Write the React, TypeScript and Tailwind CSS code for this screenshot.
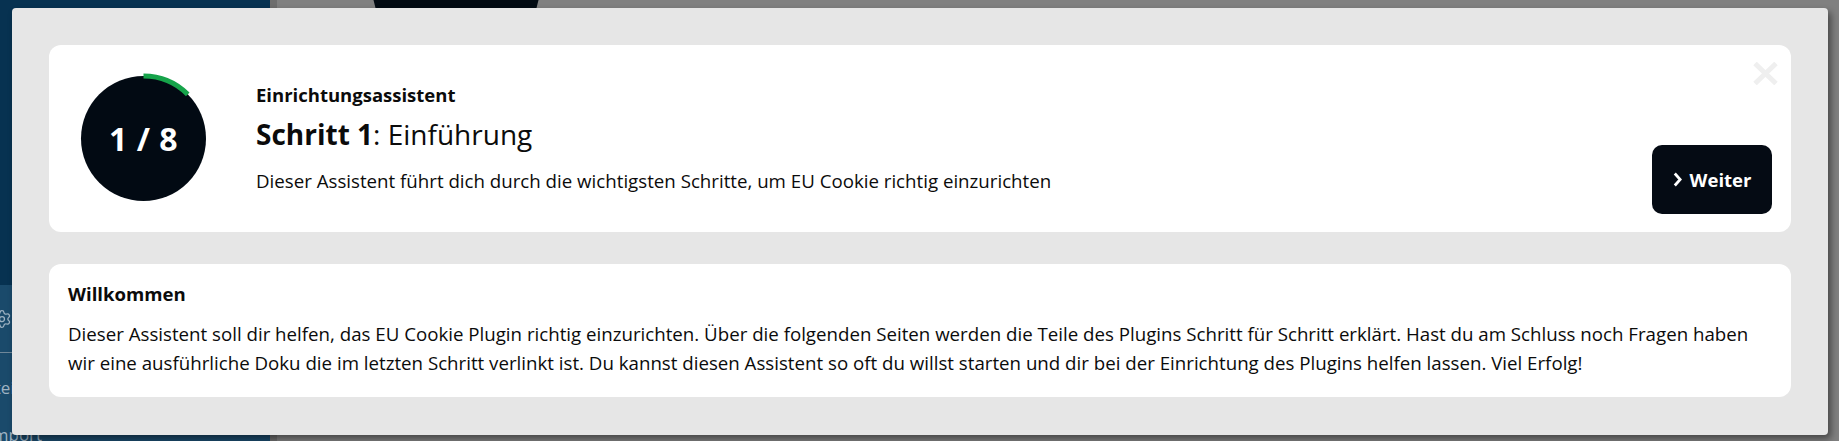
import { Settings } from 'lucide-react';

function ProgressRing({ step, total }: { step: number; total: number }) {
  const r = 62.5;
  const c = 2 * Math.PI * r;
  const part = (step / total) * c;

  return (
    <div className="relative w-[125px] h-[125px] shrink-0 rounded-full bg-[#020a13] flex items-center justify-center">
      <svg className="absolute -inset-[4px] w-[133px] h-[133px] -rotate-90" viewBox="0 0 133 133">
        <circle
          cx="66.5"
          cy="66.5"
          r={r}
          fill="none"
          stroke="#16a34a"
          strokeWidth="5"
          strokeDasharray={`${part} ${c}`}
        />
      </svg>
      <span className="text-white text-[32px] font-bold leading-none tracking-[0.5px]">
        {step} / {total}
      </span>
    </div>
  );
}

function Backdrop() {
  return (
    <div className="absolute inset-0 flex">
      <aside className="w-[270px] flex flex-col overflow-hidden">
        <div className="h-[285px] shrink-0 bg-[#073251]" />
        <div className="flex-1 bg-[#1a4a6b] flex flex-col text-[#9fb3c3] text-[17px] font-['Open_Sans',sans-serif]">
          <div className="h-[67px] shrink-0 flex items-center -ml-[8px]">
            <Settings size={20} strokeWidth={1.5} />
          </div>
          <div className="h-px shrink-0 bg-[#6f8799]" />
          <div className="h-[70px] shrink-0 flex items-center -ml-[27px]">Datei</div>
          <div className="shrink-0 leading-[24px] -ml-[12px]">Import</div>
        </div>
      </aside>
      <div className="w-[7px] bg-[#6e6e6e]" />
      <div className="flex-1 bg-[#808080]">
        <div className="ml-[95px] -mt-[100px] w-[168px] h-[168px] rounded-full bg-[#020a12]" />
      </div>
    </div>
  );
}

export default function App() {
  return (
    <div className="relative w-[1839px] h-[441px] overflow-hidden font-['Open_Sans',sans-serif] text-[#0b0b0b]">
      <Backdrop />

      <div className="absolute left-[12px] top-[8px] w-[1816px] h-[427px] rounded-[4px] bg-[#e6e6e6] shadow-[3px_4px_7px_rgba(0,0,0,0.45)] px-[37px] pt-[37px] flex flex-col gap-[32px]">
        <section className="relative h-[187px] bg-white rounded-[12px] flex items-center pl-[32px] pr-[19px]">
          <button className="absolute right-[13px] top-[17px] w-[25px] h-[23px]" aria-label="Schließen">
            <svg viewBox="0 0 25 23" className="w-[25px] h-[23px]">
              <path d="M2 1.5 L23 21.5 M23 1.5 L2 21.5" stroke="#efefef" strokeWidth="5" />
            </svg>
          </button>

          <ProgressRing step={1} total={8} />

          <div className="ml-[50px] flex-1 flex flex-col">
            <p className="text-[18.5px] leading-[24px] font-bold">Einrichtungsassistent</p>
            <h2 className="mt-[8px] text-[28px] leading-[38px]">
              <span className="font-bold">Schritt 1</span>: Einführung
            </h2>
            <p className="mt-[15px] text-[18.7px] leading-[26px]">
              Dieser Assistent führt dich durch die wichtigsten Schritte, um EU Cookie richtig einzurichten
            </p>
          </div>

          <button className="self-end mb-[18px] w-[120px] h-[69px] rounded-[10px] bg-[#050b14] text-white flex items-center justify-center gap-[8px] text-[18.5px] font-bold">
            <svg viewBox="0 0 9 15" className="w-[9px] h-[15px]">
              <path d="M1.8 1.5 L7.2 7.5 L1.8 13.5" fill="none" stroke="white" strokeWidth="2.8" />
            </svg>
            Weiter
          </button>
        </section>

        <section className="h-[133px] bg-white rounded-[12px] px-[19px] pt-[18px]">
          <h3 className="text-[18.6px] leading-[24px] font-bold">Willkommen</h3>
          <p className="mt-[13px] text-[18.7px] leading-[29px]">
            Dieser Assistent soll dir helfen, das EU Cookie Plugin richtig einzurichten. Über die folgenden Seiten
            werden die Teile des Plugins Schritt für Schritt erklärt. Hast du am Schluss noch Fragen haben wir eine
            ausführliche Doku die im letzten Schritt verlinkt ist. Du kannst diesen Assistent so oft du willst starten
            und dir bei der Einrichtung des Plugins helfen lassen. Viel Erfolg!
          </p>
        </section>
      </div>
    </div>
  );
}
